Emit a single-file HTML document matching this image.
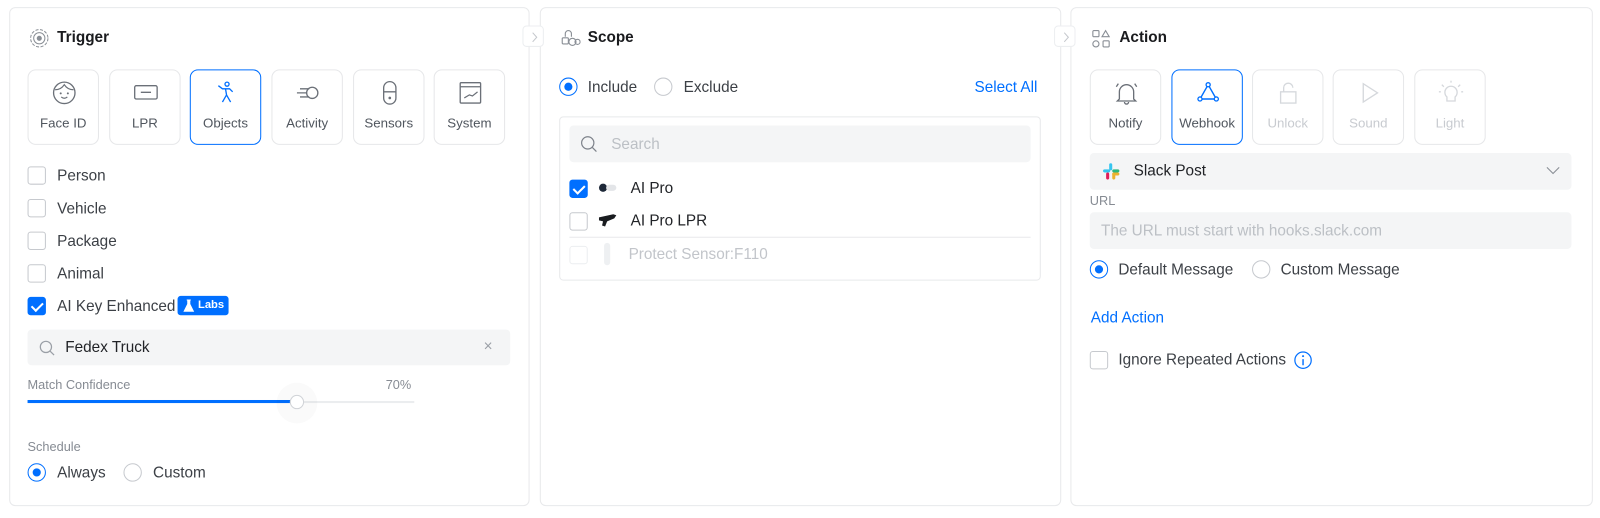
<!DOCTYPE html>
<html><head><style>
*{box-sizing:border-box;margin:0;padding:0}
body{width:1600px;height:518px;background:#fff;font-family:"Liberation Sans",sans-serif;color:#212327;position:relative;overflow:hidden}
#w{position:absolute;left:0;top:0;width:1568px;height:508px;transform:scale(1.0204);transform-origin:0 0}
.a{position:absolute}
.panel{position:absolute;top:7px;height:489px;border:1px solid #e8e9eb;border-radius:6px;background:#fff}
.h{position:absolute;top:28px;font-size:15px;font-weight:bold;color:#1a1b1e}
.tile{position:absolute;top:68px;width:70px;height:74px;border:1px solid #e6e7e9;border-radius:8px;text-align:center;font-size:13px;color:#50565e}
.tile.sel{border:1.5px solid #006fff}
.tile.dis{color:#c8cbd0}
.tile svg{position:absolute;left:23px;top:10px}
.tile span{position:absolute;left:0;right:0;top:44px}
.cb{position:absolute;width:18px;height:18px;border:1px solid #c6c9ce;border-radius:3px}
.cb.on{background:#006fff;border-color:#006fff}
.cb.on:after{content:"";position:absolute;left:5px;top:1.5px;width:5px;height:9px;border:solid #fff;border-width:0 2px 2px 0;transform:rotate(45deg)}
.lbl{position:absolute;font-size:15px;color:#3c4046;margin-top:1px;margin-left:1px}
.rd{position:absolute;width:18px;height:18px;border:1px solid #c6c9ce;border-radius:50%}
.rd.on{border-color:#006fff}
.rd.on:after{content:"";position:absolute;left:4px;top:4px;width:8px;height:8px;border-radius:50%;background:#006fff}
.inp{position:absolute;background:#f4f5f6;border-radius:4px}
.small{position:absolute;font-size:12.5px;color:#868b93}
.tog{position:absolute;top:25px;width:21px;height:21px;border:1px solid #eceef0;border-radius:4px;background:#fff}
</style></head><body><div id="w">

<div class="panel" style="left:9px;width:510px"></div>
<div class="panel" style="left:529px;width:511px"></div>
<div class="panel" style="left:1049px;width:512px"></div>
<div class="tog" style="left:512px"><svg width="21" height="21"><path d="M9 6l4 4.5-4 4.5" fill="none" stroke="#c4c7cc" stroke-width="1"/></svg></div>
<div class="tog" style="left:1033px"><svg width="21" height="21"><path d="M9 6l4 4.5-4 4.5" fill="none" stroke="#c4c7cc" stroke-width="1"/></svg></div>

<!-- Trigger -->
<svg class="a" style="left:29px;top:28px" width="19" height="19"><circle cx="9.5" cy="9.5" r="8.5" fill="none" stroke="#8a8f96" stroke-dasharray="3 1.5"/><circle cx="9.5" cy="9.5" r="5.5" fill="none" stroke="#8a8f96"/><circle cx="9.5" cy="9.5" r="2.5" fill="#8a8f96"/></svg>
<div class="h" style="left:56px">Trigger</div>

<div class="tile" style="left:27px"><svg width="24" height="24"><circle cx="12" cy="12" r="10.5" fill="none" stroke="#6b7078" stroke-width="1.3"/><path d="M3 9c4 0 7-2 9-5 2 3 5 5 9 5" fill="none" stroke="#6b7078" stroke-width="1.2"/><circle cx="8.5" cy="12.5" r="1" fill="#6b7078"/><circle cx="15.5" cy="12.5" r="1" fill="#6b7078"/><path d="M9 16q3 2.5 6 0" fill="none" stroke="#6b7078" stroke-width="1.2"/></svg><span>Face ID</span></div>
<div class="tile" style="left:107px"><svg width="24" height="24"><rect x="1" y="5" width="22" height="13" rx="1.5" fill="none" stroke="#6b7078" stroke-width="1.3"/><path d="M7 11.5h10" stroke="#6b7078" stroke-width="1.3"/></svg><span>LPR</span></div>
<div class="tile sel" style="left:186px"><svg width="24" height="24"><circle cx="12.5" cy="3.5" r="2" fill="none" stroke="#006fff" stroke-width="1.3"/><path d="M4 5l4 3h7l3 3M11 8l1 6-4 7M12 14l4 7" fill="none" stroke="#006fff" stroke-width="1.3"/></svg><span>Objects</span></div>
<div class="tile" style="left:266px"><svg width="24" height="24"><circle cx="16" cy="12" r="5.5" fill="none" stroke="#6b7078" stroke-width="1.3"/><path d="M4 8h9M1 12h9M4 16h9" stroke="#6b7078" stroke-width="1.3"/></svg><span>Activity</span></div>
<div class="tile" style="left:346px"><svg width="24" height="24"><rect x="6" y="1" width="12" height="22" rx="6" fill="none" stroke="#6b7078" stroke-width="1.3"/><path d="M6 11h12" stroke="#6b7078" stroke-width="1.3"/><circle cx="12" cy="17" r="1.3" fill="#6b7078"/></svg><span>Sensors</span></div>
<div class="tile" style="left:425px"><svg width="24" height="24"><rect x="2" y="2" width="20" height="20" rx="1" fill="none" stroke="#6b7078" stroke-width="1.3"/><path d="M2 6h20M6 17l5-3 3 1 5-4" fill="none" stroke="#6b7078" stroke-width="1.2"/></svg><span>System</span></div>

<div class="cb" style="left:27px;top:163px"></div><div class="lbl" style="left:55px;top:163px">Person</div>
<div class="cb" style="left:27px;top:195px"></div><div class="lbl" style="left:55px;top:195px">Vehicle</div>
<div class="cb" style="left:27px;top:227px"></div><div class="lbl" style="left:55px;top:227px">Package</div>
<div class="cb" style="left:27px;top:259px"></div><div class="lbl" style="left:55px;top:259px">Animal</div>
<div class="cb on" style="left:27px;top:291px"></div><div class="lbl" style="left:55px;top:291px">AI Key Enhanced</div>
<div class="a" style="left:174px;top:290px;width:50px;height:19px;background:#006fff;border-radius:3px;color:#fff;font-size:11px;font-weight:bold;line-height:19px;padding-left:20px">Labs</div>
<svg class="a" style="left:179px;top:293px" width="12" height="13"><path d="M4 1h4M5 1v4L1.5 12h9L7 5V1" fill="#fff" stroke="#fff" stroke-width="1"/></svg>

<div class="inp" style="left:27px;top:323px;width:473px;height:35px"></div>
<svg class="a" style="left:38px;top:333px" width="16" height="16"><circle cx="7" cy="7" r="5.5" fill="none" stroke="#9a9fa6" stroke-width="1.2"/><path d="M11 11l4 4" stroke="#9a9fa6" stroke-width="1.2"/></svg>
<div class="lbl" style="left:63px;top:331px;color:#212327">Fedex Truck</div>
<div class="a" style="left:474px;top:331px;font-size:15px;color:#9a9fa6">×</div>

<div class="small" style="left:27px;top:370px">Match Confidence</div>
<div class="small" style="left:378px;top:370px">70%</div>
<div class="a" style="left:27px;top:393px;width:379px;height:2px;background:#ebedef"></div>
<div class="a" style="left:27px;top:392px;width:264px;height:3px;background:#006fff"></div>
<div class="a" style="left:271px;top:375px;width:40px;height:40px;border-radius:50%;background:rgba(0,0,0,0.02)"></div>
<div class="a" style="left:284px;top:387px;width:14px;height:14px;border-radius:50%;background:#fff;border:1px solid #d0d3d7"></div>

<div class="small" style="left:27px;top:431px">Schedule</div>
<div class="rd on" style="left:27px;top:454px"></div><div class="lbl" style="left:55px;top:454px">Always</div>
<div class="rd" style="left:121px;top:454px"></div><div class="lbl" style="left:149px;top:454px">Custom</div>

<!-- Scope -->
<svg class="a" style="left:549px;top:29px" width="20" height="19"><path d="M5 7V4a3 3 0 0 1 6 0v3" fill="none" stroke="#8a8f96" stroke-width="1.1"/><rect x="2" y="8" width="6" height="6" rx="1" fill="none" stroke="#8a8f96" stroke-width="1.1"/><circle cx="12" cy="12" r="3.5" fill="none" stroke="#8a8f96" stroke-width="1.1"/><circle cx="17" cy="12" r="2.5" fill="none" stroke="#8a8f96" stroke-width="1.1"/></svg>
<div class="h" style="left:576px">Scope</div>
<div class="rd on" style="left:548px;top:76px"></div><div class="lbl" style="left:575px;top:76px">Include</div>
<div class="rd" style="left:641px;top:76px"></div><div class="lbl" style="left:669px;top:76px">Exclude</div>
<div class="lbl" style="left:954px;top:76px;color:#006fff">Select All</div>
<div class="a" style="left:548px;top:114px;width:472px;height:161px;border:1px solid #e8e9eb;border-radius:4px"></div>
<div class="inp" style="left:558px;top:123px;width:452px;height:36px"></div>
<svg class="a" style="left:569px;top:133px" width="17" height="17"><circle cx="7" cy="7" r="6" fill="none" stroke="#7d828a" stroke-width="1.2"/><path d="M11.5 11.5l4 4" stroke="#7d828a" stroke-width="1.2"/></svg>
<div class="lbl" style="left:598px;top:132px;color:#bcc0c5">Search</div>
<div class="cb on" style="left:558px;top:176px"></div>
<svg class="a" style="left:586px;top:179px" width="20" height="10"><ellipse cx="5" cy="5" rx="4" ry="4" fill="#1d2838"/><rect x="8" y="2" width="10" height="6" rx="3" fill="#e3e5e8"/></svg>
<div class="lbl" style="left:617px;top:175px;color:#212327">AI Pro</div>
<div class="cb" style="left:558px;top:208px"></div>
<svg class="a" style="left:586px;top:209px" width="20" height="14"><path d="M1 4l14-3 3 1-2 3-7 3-2 5-3-1 1-4-4-1z" fill="#1a1c20"/></svg>
<div class="lbl" style="left:617px;top:207px;color:#212327">AI Pro LPR</div>
<div class="a" style="left:558px;top:232px;width:452px;height:1px;background:#e8e9eb"></div>
<div class="cb" style="left:558px;top:241px;border-color:#eceef0"></div>
<div class="a" style="left:592px;top:238px;width:6px;height:22px;border-radius:3px;background:#eef0f2"></div>
<div class="lbl" style="left:615px;top:240px;color:#c2c5ca">Protect Sensor:F110</div>

<!-- Action -->
<svg class="a" style="left:1070px;top:29px" width="18" height="18"><rect x="1" y="1" width="6" height="6" rx="1" fill="none" stroke="#8a8f96" stroke-width="1.1"/><path d="M13.5 1l3.5 6h-7z" fill="none" stroke="#8a8f96" stroke-width="1.1"/><circle cx="4" cy="14" r="3" fill="none" stroke="#8a8f96" stroke-width="1.1"/><rect x="11" y="11" width="6" height="6" rx="1" fill="none" stroke="#8a8f96" stroke-width="1.1"/></svg>
<div class="h" style="left:1097px">Action</div>
<div class="tile" style="left:1068px"><svg width="24" height="24"><path d="M5 18V11a7 7 0 0 1 14 0v7l2 2H3z M10 21a2 2 0 0 0 4 0M2 6l2-3M22 6l-2-3" fill="none" stroke="#6b7078" stroke-width="1.3"/></svg><span>Notify</span></div>
<div class="tile sel" style="left:1148px"><svg width="24" height="24"><path d="M12 4L4 18h16z" fill="none" stroke="#006fff" stroke-width="1.4"/><circle cx="12" cy="4" r="2" fill="#fff" stroke="#006fff" stroke-width="1.3"/><circle cx="4" cy="18" r="2" fill="#fff" stroke="#006fff" stroke-width="1.3"/><circle cx="20" cy="18" r="2" fill="#fff" stroke="#006fff" stroke-width="1.3"/></svg><span>Webhook</span></div>
<div class="tile dis" style="left:1227px"><svg width="24" height="24"><rect x="4" y="11" width="15" height="11" fill="none" stroke="#d5d8dc" stroke-width="1.3"/><path d="M7 11V7a4.5 4.5 0 0 1 9 0" fill="none" stroke="#d5d8dc" stroke-width="1.3"/></svg><span>Unlock</span></div>
<div class="tile dis" style="left:1306px"><svg width="24" height="24"><path d="M6 3v18l14-9z" fill="none" stroke="#d5d8dc" stroke-width="1.3"/></svg><span>Sound</span></div>
<div class="tile dis" style="left:1386px"><svg width="24" height="24"><path d="M8 16a6 6 0 1 1 8 0v4H8zM9 20h6M12 0v2M3 4l2 2M21 4l-2 2M0 11h2M22 11h2" fill="none" stroke="#d5d8dc" stroke-width="1.3"/></svg><span>Light</span></div>

<div class="inp" style="left:1068px;top:150px;width:472px;height:36px"></div>
<svg class="a" style="left:1080px;top:159px" width="18" height="18"><rect x="7" y="1" width="3" height="7" rx="1.5" fill="#36c5f0"/><rect x="1" y="7" width="7" height="3" rx="1.5" fill="#36c5f0"/><rect x="10" y="7" width="7" height="3" rx="1.5" fill="#2eb67d"/><rect x="10" y="10" width="3" height="7" rx="1.5" fill="#ecb22e"/><rect x="4" y="10" width="3" height="7" rx="1.5" fill="#e01e5a"/><rect x="10" y="10" width="7" height="3" rx="1.5" fill="#ecb22e"/></svg>
<div class="lbl" style="left:1110px;top:158px;color:#212327">Slack Post</div>
<svg class="a" style="left:1515px;top:162px" width="14" height="10"><path d="M1 2l6 6 6-6" fill="none" stroke="#8a8f96" stroke-width="1.1"/></svg>
<div class="small" style="left:1068px;top:190px">URL</div>
<div class="inp" style="left:1068px;top:208px;width:472px;height:36px"></div>
<div class="lbl" style="left:1078px;top:217px;color:#bcc0c5">The URL must start with hooks.slack.com</div>
<div class="rd on" style="left:1068px;top:255px"></div><div class="lbl" style="left:1095px;top:255px">Default Message</div>
<div class="rd" style="left:1227px;top:255px"></div><div class="lbl" style="left:1254px;top:255px">Custom Message</div>
<div class="lbl" style="left:1068px;top:302px;color:#006fff">Add Action</div>
<div class="cb" style="left:1068px;top:344px"></div><div class="lbl" style="left:1095px;top:343px">Ignore Repeated Actions</div>
<svg class="a" style="left:1268px;top:344px" width="18" height="18"><circle cx="9" cy="9" r="8" fill="none" stroke="#006fff" stroke-width="1.2"/><circle cx="9" cy="5" r="1" fill="#006fff"/><path d="M9 8v6" stroke="#006fff" stroke-width="1.4"/></svg>
</div></body></html>
